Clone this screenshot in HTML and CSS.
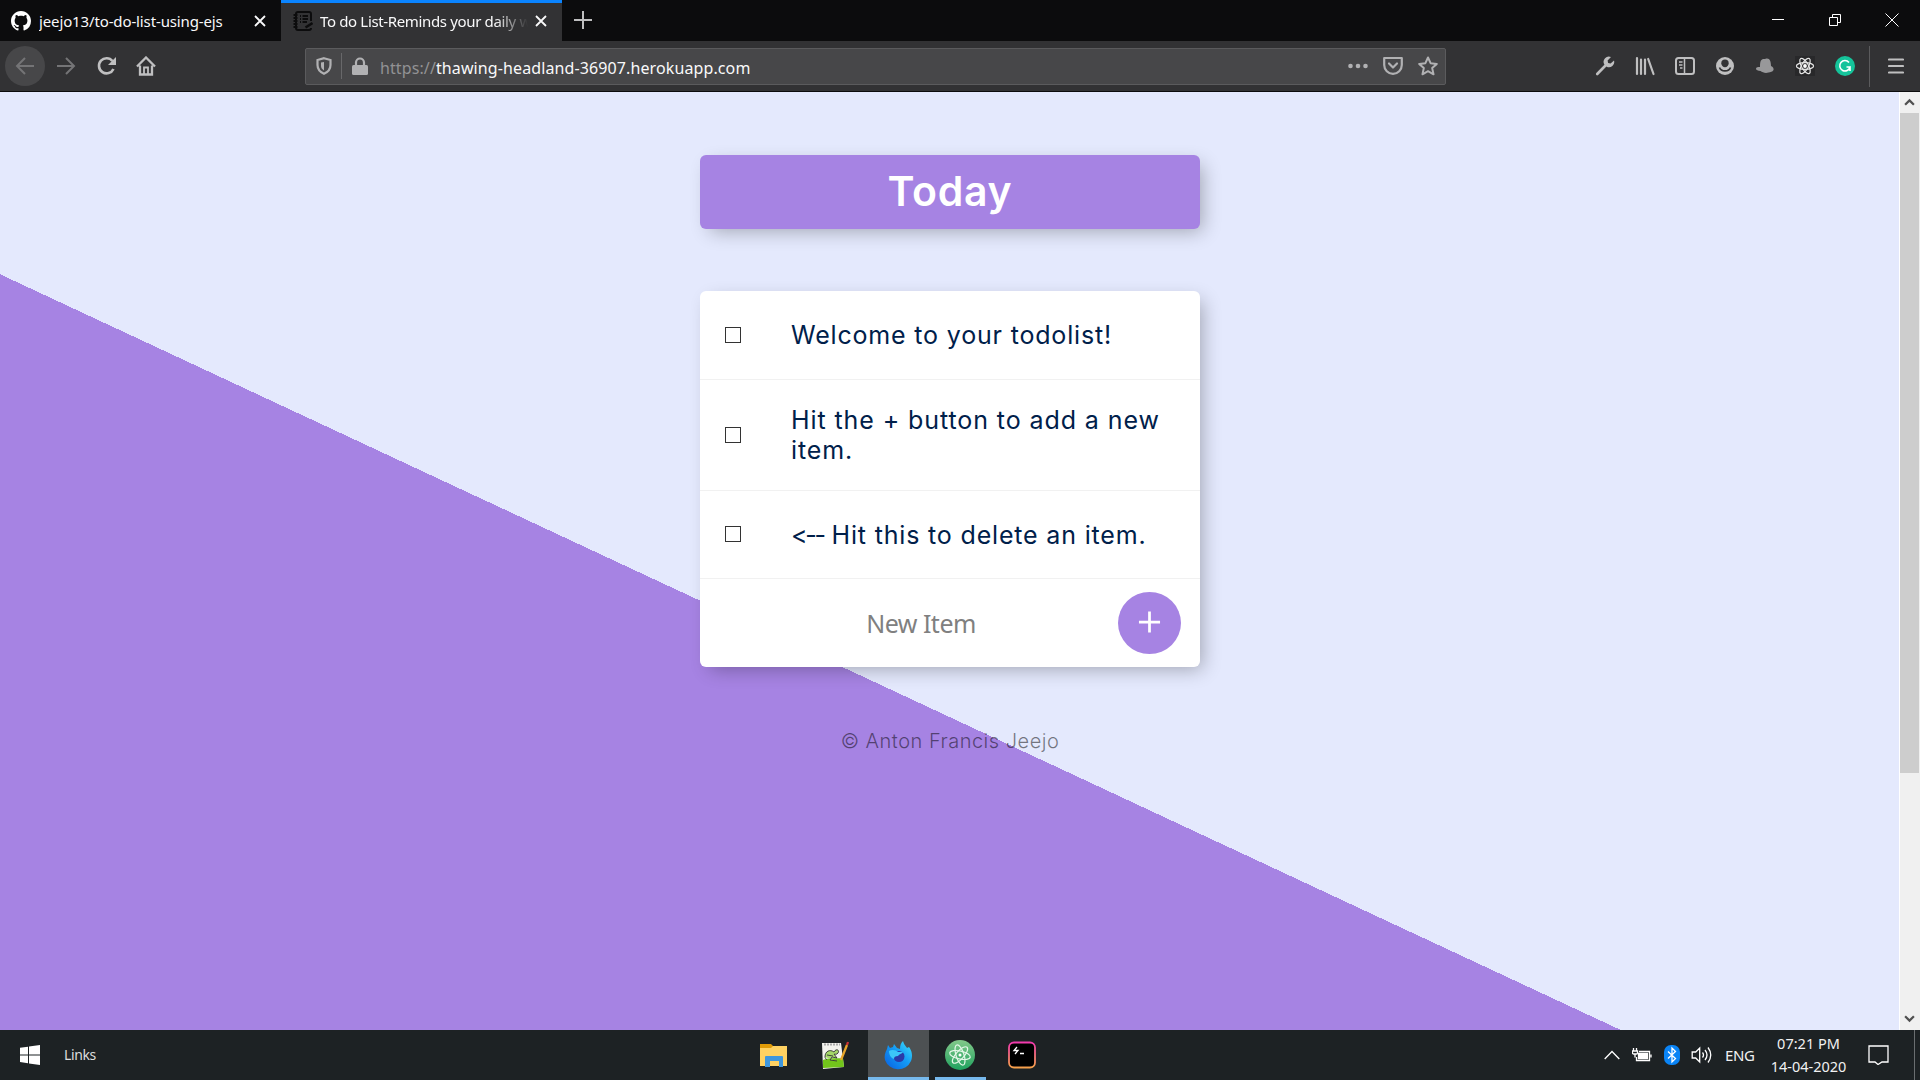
FILE: index.html
```html
<!DOCTYPE html>
<html lang="en">
<head>
<meta charset="utf-8">
<title>To do List-Reminds your daily work</title>
<link rel="stylesheet" href="styles.css">
</head>
<body>
<div class="screen">
  <header class="tabs">
    <div class="tab">
      <svg class="favicon" viewBox="0 0 16 16"><path fill="#fff" d="M8 0C3.58 0 0 3.58 0 8c0 3.54 2.29 6.53 5.47 7.59.4.07.55-.17.55-.38 0-.19-.01-.82-.01-1.49-2.01.37-2.53-.49-2.69-.94-.09-.23-.48-.94-.82-1.13-.28-.15-.68-.52-.01-.53.63-.01 1.08.58 1.23.82.72 1.21 1.87.87 2.33.66.07-.52.28-.87.51-1.07-1.78-.2-3.64-.89-3.64-3.95 0-.87.31-1.59.82-2.15-.08-.2-.36-1.02.08-2.12 0 0 .67-.21 2.2.82.64-.18 1.32-.27 2-.27s1.36.09 2 .27c1.53-1.04 2.2-.82 2.2-.82.44 1.1.16 1.92.08 2.12.51.56.82 1.27.82 2.15 0 3.07-1.87 3.75-3.65 3.95.29.25.54.73.54 1.48 0 1.07-.01 1.93-.01 2.2 0 .21.15.46.55.38A8 8 0 0 0 16 8c0-4.42-3.58-8-8-8z"/></svg>
      <span class="tab-title t1">jeejo13/to-do-list-using-ejs</span>
      <svg class="close" viewBox="0 0 12 12"><path d="M1 1l10 10M11 1L1 11"/></svg>
    </div>
    <div class="tab active">
      <svg class="favicon" viewBox="0 0 20 20" fill="none" stroke="#0c0c0d" stroke-width="1.5"><path d="M18 10V3q0-2-2-2H5Q3 1 3 3v14q0 2 2 2h11q2 0 2-2M.5 4h4M.5 7h4M.5 10h4M.5 13h4M.5 16h4M7 5h1M9.500 5H15M7 8h1M9.500 8H15M7 11h1M9.500 11H14"/><path d="M12.500 16.500l7-4.500" stroke-width="2.500"/></svg>
      <span class="tab-title t2">To do List-Reminds your daily work</span>
      <svg class="close" viewBox="0 0 12 12"><path d="M1 1l10 10M11 1L1 11"/></svg>
    </div>
    <svg class="new-tab" viewBox="0 0 18 18"><path d="M9 0v18M0 9h18"/></svg>
    <div class="window-buttons">
      <svg viewBox="0 0 14 14"><path d="M1 6.5h12"/></svg>
      <svg viewBox="0 0 14 14"><path d="M1.5 4.500h8v8h-8zM4.500 4.500v-3h8v8h-3"/></svg>
      <svg viewBox="0 0 14 14"><path d="M.5.5l13 13M13.500.5l-13 13"/></svg>
    </div>
  </header>

  <nav class="toolbar">
    <div class="nav-buttons">
      <span class="back"><svg viewBox="0 0 20 20"><path d="M19 10H2M10 2l-8 8 8 8"/></svg></span>
      <svg class="dim" viewBox="0 0 20 20"><path d="M1 10h17M10 2l8 8-8 8"/></svg>
      <svg class="reload" viewBox="0 0 20 20"><path d="M16.500 13A7.600 7.600 0 1 1 15.500 5" stroke-width="2.600"/><path d="M19 1v8h-8z" fill="#bfbfc0" stroke="none"/></svg>
      <svg viewBox="0 0 20 20"><path d="M1 10.500L10 1.500l9 9M4 9.500V18.500h12V9.500" stroke-width="2.300"/><path d="M8 18v-6.500h4V18" stroke-width="1.800"/></svg>
    </div>
    <div class="url-bar">
      <svg class="shield" viewBox="0 0 16 18"><path d="M8 1.200L14.500 3v5c0 4.500-2.500 7-6.500 8.800C4 15 1.500 12.500 1.500 8V3z" stroke-width="2.200"/><path d="M8 5v8.500C5.500 12 5 10.500 5 8V5.500z" fill="#b1b1b3" stroke="none"/></svg>
      <i class="sep"></i>
      <svg class="lock" viewBox="0 0 16 18"><path d="M4 9V5.500a4 4 0 0 1 8 0V9" stroke-width="2.200"/><rect x="0" y="8" width="16" height="10" rx="1.500" fill="#b1b1b3" stroke="none"/></svg>
      <span class="url"><span class="scheme">https://</span>thawing-headland-36907.herokuapp.com</span>
      <svg class="page-icon" viewBox="0 0 20 20"><g fill="#b1b1b3" stroke="none"><circle cx="2.500" cy="10" r="2.300"/><circle cx="10" cy="10" r="2.300"/><circle cx="17.500" cy="10" r="2.300"/></g></svg>
      <svg class="page-icon" viewBox="0 0 20 20"><path d="M1.200 2h17.600v7a8.800 8.800 0 0 1-17.600 0zM6 7.500l4 4 4-4" stroke-width="2.200" stroke-linejoin="round" stroke-linecap="round"/></svg>
      <svg class="page-icon" viewBox="0 0 20 20"><path d="M10 1.500l2.600 5.700 6.200.7-4.600 4.200 1.300 6.200L10 15.200l-5.500 3.100 1.300-6.200L1.200 7.900l6.200-.7z" stroke-width="2" stroke-linejoin="round"/></svg>
    </div>
    <div class="extensions">
      <svg viewBox="0 0 20 20"><path d="M2.200 18L11 9" stroke-width="2.600" stroke-linecap="round"/><path fill="#bfbfc0" stroke="none" d="M16 1a5.300 5.300 0 0 0-6.800 7.300l2.500 2.500a5.300 5.300 0 0 0 7.300-6.300l-3.400 3-2.500-.6-.5-2.500z"/></svg>
      <svg viewBox="0 0 20 20"><path d="M2 2v16M6 3.500V18M10 3.500V18M13.200 3l5.300 15" stroke-width="2.200" stroke-linecap="round"/></svg>
      <svg viewBox="0 0 20 20"><rect x="1" y="2" width="18" height="16" rx="2.500" stroke-width="2"/><path d="M9.500 2v16M4 6h3.500M4 9h3.500M5 12h2.500" stroke-width="1.500"/></svg>
      <svg viewBox="0 0 20 20"><circle cx="10" cy="10" r="9" fill="#bfbfc0" stroke="none"/><path d="M10 3.500a3.700 3.700 0 0 1 3.700 3.700c0 2.200-1.600 4-3.700 4s-3.700-1.800-3.700-4A3.700 3.700 0 0 1 10 3.500z" fill="#323234" stroke="none"/><path d="M4.500 11.500c1.500 4.500 9.500 4.500 11 0" stroke="#323234" stroke-width="1.600"/></svg>
      <svg viewBox="0 0 20 20"><path fill="#98989a" stroke="none" d="M5 11C5 5 6 3 9 3c1.500 0 2-.5 3-.5 3 0 4 3.500 4 7.500 2 1 3 2.500 2.500 4-1 2-3 2-5 2.500-3 1-6 0-8-1.500C3 14.500 1 14.500 1 12.500 1 11 3 11 5 11z"/></svg>
      <svg class="react" viewBox="0 0 20 20"><g stroke="#e5e5e5" stroke-width="1.200"><ellipse cx="10" cy="10" rx="8.600" ry="3.400"/><ellipse cx="10" cy="10" rx="8.600" ry="3.400" transform="rotate(60 10 10)"/><ellipse cx="10" cy="10" rx="8.600" ry="3.400" transform="rotate(120 10 10)"/></g><circle cx="10" cy="10" r="1.900" fill="#fff" stroke="none"/></svg>
      <svg viewBox="0 0 20 20"><circle cx="10" cy="10" r="10" fill="#15c39a" stroke="none"/><path d="M14 6.500a5.200 5.200 0 1 0 1 4.500h-3.500M15 11v4" stroke="#fff" stroke-width="1.600"/></svg>
    </div>
    <i class="menu-sep"></i>
    <svg class="menu" viewBox="0 0 16 16"><path d="M1 1.500h14M1 8h14M1 14.500h14" stroke-width="2.200" stroke-linecap="round"/></svg>
  </nav>

  <main class="viewport">
    <div class="page">
      <div class="box heading"><h1>Today</h1></div>
      <div class="box list">
        <div class="item"><span class="check"></span><p class="p1">Welcome to your todolist!</p></div>
        <div class="item two"><span class="check"></span><p class="p2">Hit the + button to add a new<br>item.</p></div>
        <div class="item"><span class="check"></span><p class="p3"><span class="arrow">&lt;--</span> Hit this to delete an item.</p></div>
        <div class="new-item">
          <span class="placeholder">New Item</span>
          <span class="add"><svg viewBox="0 0 24 24"><path d="M12 .5v23M.5 12h23"/></svg></span>
        </div>
      </div>
      <footer><span>© Anton Francis Jeejo</span></footer>
    </div>
    <div class="scrollbar">
      <svg viewBox="0 0 10 7"><path d="M1 6l4-4 4 4"/></svg>
      <i class="thumb"></i>
      <svg class="down" viewBox="0 0 10 7"><path d="M1 1l4 4 4-4"/></svg>
    </div>
  </main>

  <footer class="taskbar">
    <div class="start">
      <svg viewBox="0 0 20 20"><path fill="#fff" d="M0 2.800l8-1.100v7.700H0zM9 1.500L20 0v9.400H9zM0 10.400h8v7.800l-8-1.100zM9 10.400h11V20L9 18.400z"/></svg>
      <span>Links</span>
    </div>
    <div class="apps">
      <span class="app"><svg viewBox="0 0 30 30"><path fill="#e09b07" d="M1 4h11l2 2v5H1z"/><path fill="#ffd262" d="M1 8h11l2-2h14v20H1z"/><path fill="#3f97dd" d="M6 27V17q0-1 1-1h16q1 0 1 1v10h-4v-6h-9v6z"/></svg></span>
      <span class="app"><svg viewBox="0 0 30 30"><path fill="#f3f3ee" d="M2 3h19l3 24-21 2z"/><path fill="#72c51b" d="M3 20c8-3 14-1 20-2l1 9-21 1z"/><path d="M4 4.500h16" stroke="#aaa" stroke-width="2" stroke-dasharray="2 1"/><path fill="#a5d86a" stroke="#333" stroke-width=".9" d="M5 17c0-6 5-8 9-5 2-4 6-2 4 1-1 2-4 1-4 1l3 4-5-1-2 3 7 1M7 15l6 1M7 20c-1-1-2-2-2-3"/><path stroke="#e8a52a" stroke-width="2.300" d="M21 20l6-15"/><path stroke="#c33" stroke-width="2.300" d="M27 5l1-3"/></svg></span>
      <span class="app current"><svg viewBox="0 0 30 30"><defs><linearGradient id="fox" x1="1" y1="0" x2="0" y2="1"><stop offset="0" stop-color="#42e4fb"/><stop offset=".45" stop-color="#149cf5"/><stop offset="1" stop-color="#095ee0"/></linearGradient></defs><path fill="url(#fox)" d="M3 9l1-4 2 3 3-1 1-3 3 4 3 1c0-4 1-6 3-8 1 4 3 5 4 7l2-1c3 4 4 9 2 14a14 14 0 0 1-26-1c-1-4 0-7 2-11z"/><circle cx="15" cy="16.500" r="5.500" fill="#2a3aa8"/><path fill="#3cc6f8" d="M5 11c3-2 7-1 9 1h5c-1 2-4 2-5 4-3 0-4 1-4 3-3-1-5-4-5-8z"/></svg></span>
      <span class="app running"><svg viewBox="0 0 30 30"><defs><linearGradient id="atom" x2="0" y2="1"><stop stop-color="#83c98a"/><stop offset="1" stop-color="#20a25f"/></linearGradient></defs><circle cx="15" cy="15" r="15" fill="url(#atom)"/><g fill="none" stroke="#e4f7e8" stroke-width="1.200"><ellipse cx="15" cy="15" rx="10.500" ry="4" transform="rotate(12 15 15)"/><ellipse cx="15" cy="15" rx="10.500" ry="4" transform="rotate(72 15 15)"/><ellipse cx="15" cy="15" rx="10.500" ry="4" transform="rotate(132 15 15)"/></g><circle cx="15" cy="15" r="1.500" fill="#fff"/></svg></span>
      <span class="app last"><svg viewBox="0 0 30 30"><defs><linearGradient id="term" x2="0" y2="1"><stop stop-color="#f23aae"/><stop offset="1" stop-color="#f5a04a"/></linearGradient></defs><rect x="2" y="2.500" width="26" height="25" rx="5" fill="#000" stroke="url(#term)" stroke-width="1.800"/><path d="M10 7L7 10.500h4L8 14M13 13.500h4" fill="none" stroke="#fff" stroke-width="1.300"/></svg></span>
    </div>
    <div class="tray">
      <svg class="chev" viewBox="0 0 16 10"><path d="M.7 9L8 1.500 15.300 9"/></svg>
      <svg class="battery" viewBox="0 0 20 14"><path d="M4.500 9v3.500h13v-9H7M19 6.500v3M1.500 0v3M4.500 0v3M.5 3h5v2q0 1-1 1h-3q-1 0-1-1zM3 6v3.500"/><path d="M6.500 5.500h9v5h-9z" fill="#fff"/></svg>
      <svg class="bt" viewBox="0 0 16 20"><rect width="16" height="20" rx="7" fill="#0a84f5" stroke="none"/><path d="M4 6.500l7.500 7L8 17V3l3.500 3.500-7.500 7"/></svg>
      <svg class="sound" viewBox="0 0 20 18"><path d="M.7 6h3.500l4-4v14l-4-4H.7zM11 6.500q2 2.500 0 5M13.500 4q4 5 0 10M16.500 1.500q5.500 7.500 0 15"/></svg>
      <span class="lang">ENG</span>
      <span class="clock"><span>07:21 PM</span><span>14-04-2020</span></span>
      <svg class="notice" viewBox="0 0 21 20"><path d="M1 1h19v16h-6l-4 2.500L7 17H1z"/></svg>
      <i class="desktop"></i>
    </div>
  </footer>
</div>
</body>
</html>
```
FILE: styles.css
```css
* { box-sizing: border-box; }
body { margin: 0; font-family: "Noto Sans", sans-serif; }
svg { display: block; flex: none; fill: none; stroke: #bfbfc0; stroke-width: 2; }
.screen { width: 1920px; height: 1080px; display: flex; flex-direction: column; overflow: hidden; }

.tabs { height: 41px; flex: none; display: flex; align-items: center; background: #0c0c0d; color: #f9f9fa; }
.tab { width: 281px; height: 41px; display: flex; align-items: center; padding: 1px 15px 0 11px; }
.tab.active { background: #323234; border-top: 3px solid #0a84ff; padding: 0 15px 2px 12px; }
.favicon { width: 20px; height: 20px; stroke: none; }
.tab.active .favicon { stroke: #0c0c0d; }
.tab-title { flex: 1; margin-left: 8px; font-size: 15px; white-space: nowrap; overflow: hidden; }
.t1 { letter-spacing: -0.13px; }
.t2 { margin-left: 7px; letter-spacing: -0.35px; margin-right: 7px; -webkit-mask-image: linear-gradient(90deg, #000 84%, transparent 100%); mask-image: linear-gradient(90deg, #000 84%, transparent 100%); }
.close { width: 12px; height: 12px; stroke: #f9f9fa; stroke-width: 1.8; }
.new-tab { width: 18px; height: 18px; margin: 0 0 1px 12px; stroke: #bfbfc0; }
.window-buttons { margin-left: auto; display: flex; gap: 43px; padding: 0 21px 1px 0; }
.window-buttons svg { width: 14px; height: 14px; stroke: #fff; stroke-width: 1; }

.toolbar { height: 51px; flex: none; display: flex; align-items: center; background: #323234; border-bottom: 1px solid #0c0c0d; }
.nav-buttons { width: 305px; display: flex; align-items: center; gap: 20px; padding-left: 5px; }
.nav-buttons svg { width: 20px; height: 20px; }
.nav-buttons .reload { margin: 0 -1px 0 1px; }
.back { width: 40px; height: 40px; display: flex; align-items: center; justify-content: center; border-radius: 50%; background: #474749; margin-right: -9px; }
.nav-buttons .back svg, .nav-buttons .dim { stroke: #747476; }
.url-bar { width: 1141px; height: 37px; display: flex; align-items: center; padding: 0 7px 0 10px; background: #474749; border: 1px solid #5b5b5d; border-radius: 2px; }
.url-bar svg { stroke: #b1b1b3; }
.shield { width: 16px; height: 18px; }
.sep { width: 1px; height: 26px; margin: 0 10px 0 9px; background: #68686a; }
.lock { width: 16px; height: 18px; }
.url { flex: 1; margin-left: 12px; padding-top: 3px; font-size: 16px; letter-spacing: 0.11px; color: #f9f9fa; white-space: nowrap; }
.scheme { color: #929294; letter-spacing: 0.1px; }
.page-icon { width: 20px; height: 20px; margin-left: 15px; }
.extensions { margin-left: 149px; display: flex; gap: 20px; }
.extensions svg { width: 20px; height: 20px; }
.extensions .react { background: #28282a; }
.menu-sep { width: 1px; height: 41px; margin-left: 14px; background: #5b5b5d; }
.menu { width: 16px; height: 16px; margin-left: 18px; }

.viewport { height: 938px; flex: none; display: flex; overflow: hidden; }
.page { width: 1899px; height: 1250px; flex: none; display: flex; flex-direction: column; align-items: center; padding: 63px 0 0 1px; background: linear-gradient(25deg, #a683e3 50%, #e4e9fd 50%); }
.box { width: 500px; flex: none; border-radius: 6px; box-shadow: 6px 6px 19px -4px rgba(0, 0, 0, 0.3); }
.heading { height: 74px; display: flex; align-items: center; justify-content: center; background: #a683e3; }
h1 { margin: 0; padding-bottom: 1px; font: 600 41px/1 Inter, sans-serif; letter-spacing: 0.7px; color: #fff; }
.list { margin-top: 62px; height: 376px; background: #fff; }
.item { display: flex; align-items: center; padding-left: 25px; border-bottom: 1px solid #f1f1f1; box-sizing: content-box; width: 475px; height: 88px; }
.item.two { height: 110px; }
.item:nth-child(3) { height: 87px; }
.check { width: 16px; height: 16px; flex: none; border: 1px solid #333; background: #fff; }
.item:nth-child(3) .check { margin-bottom: 2px; }
.item p { margin: 0 0 0 50px; font: 400 25px/30px Inter, sans-serif; color: #00204a; white-space: nowrap; }
.p1 { letter-spacing: 0.82px; }
.p2 { letter-spacing: 0.91px; }
.p3 { letter-spacing: 0.83px; }
.arrow { letter-spacing: -2.3px; }
.new-item { height: 88px; display: flex; align-items: center; padding-right: 19px; }
.placeholder { flex: 1; padding-left: 24px; text-align: center; font-size: 25px; letter-spacing: -0.5px; color: #808080; }
.add { width: 63px; height: 62px; display: flex; align-items: center; justify-content: center; border-radius: 50%; background: #a683e3; }
.add svg { width: 23px; height: 22px; stroke: #fff; stroke-width: 3; margin-top: -3px; }
.page footer { margin-top: 60px; font: 300 20px/28px Inter, sans-serif; letter-spacing: 0.5px; color: rgba(0, 0, 0, 0.5); }

.scrollbar { width: 21px; height: 938px; display: flex; flex-direction: column; align-items: center; background: #f0f0f0; border-left: 1px solid #fff; padding: 6px 1px 7px 0; }
.scrollbar svg { width: 11px; height: 8px; stroke: #505050; }
.thumb { width: 19px; height: 660px; margin-top: 7px; background: #cdcdcd; }
.scrollbar .down { margin-top: auto; }

.taskbar { height: 50px; flex: none; display: flex; align-items: center; background: #1d2224; color: #f1f1f1; }
.start { width: 743px; display: flex; align-items: center; padding-left: 20px; gap: 24px; font-size: 14px; letter-spacing: -0.4px; color: #ddd; }
.start span { padding-bottom: 2px; }
.start svg { width: 20px; height: 20px; stroke: none; }
.apps { display: flex; height: 50px; }
.app { width: 61px; height: 50px; display: flex; align-items: center; justify-content: center; }
.app svg { width: 30px; height: 30px; stroke: none; }
.app.current { background: #4d5153; border-bottom: 3px solid #76b9ed; padding-top: 3px; margin-left: 3px; }
.app.running { width: 51px; margin: 0 5px 0 6px; border-bottom: 3px solid #76b9ed; padding: 3px 1px 0 0; }
.tray { height: 50px; margin-left: auto; display: flex; align-items: center; }
.tray svg { stroke: #fff; stroke-width: 1.3; }
.chev { width: 16px; height: 10px; }
.battery { width: 20px; height: 14px; margin-left: 12px; }
.bt { width: 16px; height: 20px; margin-left: 12px; }
.sound { width: 21px; height: 18px; margin-left: 11px; }
.lang { margin-left: 13px; width: 29px; font-size: 15px; letter-spacing: -0.4px; }
.clock { width: 77px; margin: 0 0 1px 16px; display: flex; flex-direction: column; align-items: center; font-size: 14.5px; line-height: 23px; white-space: nowrap; }
.notice { width: 21px; height: 20px; margin-left: 21px; }
.desktop { width: 1px; height: 50px; margin: 0 5px 0 25px; background: #6a6e70; }
```
